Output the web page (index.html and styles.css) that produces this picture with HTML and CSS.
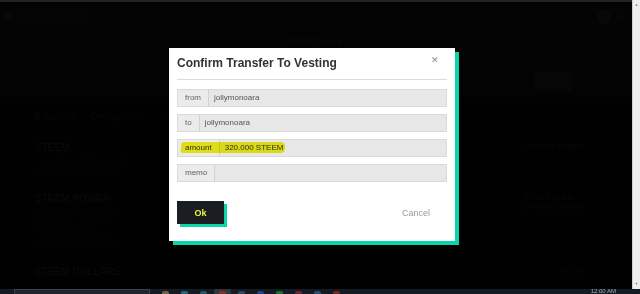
FILE: index.html
```html
<!DOCTYPE html>
<html lang="en">
<head>
  <meta charset="UTF-8" />
  <title>Confirm Transfer To Vesting</title>
  <link rel="stylesheet" href="styles.css">
</head>
<body>
  <div class="screen">
    <div class="viewport">
      <div class="topline"></div>
      <header class="site-header">
        <div class="logo"><span class="logo-mark"></span>steemit wallet</div>
        <div class="header-right"><span class="avatar"></span><span class="burger">&#9776;</span></div>
      </header>
      <div class="banner">
        <div class="banner-name">jollymonoara</div>
        <div class="banner-row">
          <span>Tell Steemit</span>
          <span class="banner-btn">Wallet</span>
        </div>
      </div>
      <nav class="tabs">
        <span>Balances</span>
        <span>Delegations</span>
        <span>Keys</span>
      </nav>
      <section class="wallet">
        <div class="wallet-row">
          <div>
            <h3>STEEM</h3>
            <p>Tradeable tokens that may be</p>
            <p>Steem can be converted to</p>
          </div>
          <div class="wallet-val">320.000 STEEM</div>
        </div>
        <div class="wallet-row">
          <div>
            <h3>STEEM POWER</h3>
            <p>Influence tokens which give</p>
            <p>and allow you to earn on</p>
            <p>STEEM POWER is non-</p>
            <p>to convert back to STEEM.</p>
          </div>
          <div class="wallet-val">0.000 STEEM<br>(+0.000 STEEM)</div>
        </div>
        <div class="wallet-row">
          <h3>STEEM DOLLARS</h3>
          <div class="wallet-val">$0.000</div>
        </div>
      </section>

      <div class="modal">
        <div class="modal-head">
          <h2>Confirm Transfer To Vesting</h2>
          <span class="close">&#x2715;</span>
        </div>
        <div class="fields">
          <div class="field"><span class="field-label">from</span><span class="field-value">jollymonoara</span></div>
          <div class="field"><span class="field-label">to</span><span class="field-value">jollymonoara</span></div>
          <div class="field marked"><span class="field-label">amount</span><span class="field-value">320.000 STEEM</span><span class="highlight"></span></div>
          <div class="field"><span class="field-label">memo</span><span class="field-value"></span></div>
        </div>
        <div class="actions">
          <button class="btn-ok">Ok</button>
          <span class="btn-cancel">Cancel</span>
        </div>
      </div>
    </div>
    <div class="scrollbar">
      <span class="arrow">&#9650;</span>
      <span class="arrow">&#9660;</span>
    </div>
  </div>
  <div class="taskbar">
    <span class="search"></span>
    <span class="tb-icon" style="background:#6a6440"></span>
    <span class="tb-icon" style="background:#25667a"></span>
    <span class="tb-icon" style="background:#215868"></span>
    <span class="tb-icon active" style="background:#863028"></span>
    <span class="tb-icon" style="background:#30455a"></span>
    <span class="tb-icon" style="background:#1e4686"></span>
    <span class="tb-icon" style="background:#1f6e32"></span>
    <span class="tb-icon" style="background:#6a2630"></span>
    <span class="tb-icon" style="background:#265072"></span>
    <span class="tb-icon" style="background:#722626"></span>
    <span class="clock">12:00 AM</span>
  </div>
</body>
</html>
```

FILE: styles.css
```css
* {
  box-sizing: border-box;
}

html,
body {
  height: 100%;
}

body {
  margin: 0;
  font-family: 'Liberation Sans', Arial, sans-serif;
  background: #000;
  display: flex;
  flex-direction: column;
  overflow: hidden;
}

.screen {
  flex: 1;
  display: flex;
  min-height: 0;
}

.viewport {
  flex: 1;
  position: relative;
  background: #010101;
  overflow: hidden;
}

/* dimmed page under the overlay */
.topline {
  height: 2px;
  background: #222;
}

.site-header {
  height: 29px;
  background: #040404;
  display: flex;
  align-items: center;
  justify-content: space-between;
  padding: 0 6px 0 3px;
  color: #080808;
  font-size: 12px;
}

.logo {
  display: flex;
  align-items: center;
  gap: 4px;
}

.logo-mark {
  width: 9px;
  height: 9px;
  border-radius: 50%;
  background: #090909;
}

.header-right {
  display: flex;
  align-items: center;
  gap: 6px;
}

.avatar {
  width: 14px;
  height: 14px;
  border-radius: 50%;
  background: #080808;
}

.burger {
  font-size: 10px;
}

.banner {
  height: 66px;
  background: #030303;
  padding: 4px 0 0;
  color: #080808;
  font-size: 10px;
}

.banner-name {
  text-align: center;
  font-weight: bold;
  font-size: 10px;
  margin-left: -8px;
}

.banner-row {
  display: flex;
  justify-content: space-between;
  align-items: flex-end;
  padding: 26px 60px 0 57px;
}

.banner-btn {
  background: #060606;
  padding: 4px 6px;
}

.tabs {
  display: flex;
  gap: 16px;
  padding: 14px 34px 0;
  color: #080808;
  font-size: 10px;
}

.wallet {
  padding: 20px 48px 0 35px;
  color: #060606;
  font-size: 7px;
}

.wallet h3 {
  margin: 0 0 4px;
  font-size: 10px;
  color: #080808;
}

.wallet p {
  margin: 0 0 4px;
}

.wallet-row {
  display: flex;
  justify-content: space-between;
  margin-bottom: 14px;
}

.wallet-val {
  font-size: 8px;
  color: #070707;
  font-weight: bold;
}

/* modal */
.modal {
  position: absolute;
  left: 169px;
  top: 48px;
  width: 286px;
  height: 193px;
  background: #fff;
  box-shadow: 4px 4px 0 #06d6a9;
  padding: 0 8px;
}

.modal-head {
  display: flex;
  justify-content: space-between;
  align-items: flex-start;
  padding: 9px 0 9px;
  border-bottom: 1px solid #dcdcdc;
}

.modal-head h2 {
  margin: 0;
  font-size: 12px;
  line-height: 13px;
  color: #333;
}

.close {
  font-size: 9px;
  color: #8a8a8a;
  margin-right: 8px;
  margin-top: -2px;
}

.fields {
  display: flex;
  flex-direction: column;
  gap: 7px;
  padding-top: 9px;
}

.field {
  position: relative;
  display: flex;
  height: 18px;
  background: #e7e7e7;
  border: 1px solid #dadada;
  font-size: 8px;
  line-height: 16px;
}

.field-label {
  padding: 0 7px;
  color: #666;
  background: #ebebeb;
  border-right: 1px solid #d2d2d2;
}

.field-value {
  flex: 1;
  padding-left: 5px;
  color: #555;
}

.marked .field-label,
.marked .field-value {
  color: #333;
}

.highlight {
  position: absolute;
  left: 3px;
  top: 2px;
  width: 104px;
  height: 11px;
  background: #f0f01c;
  mix-blend-mode: multiply;
  border-radius: 2px 5px 4px 2px;
  transform: skewX(-6deg);
}

.actions {
  display: flex;
  justify-content: space-between;
  align-items: center;
  padding-top: 19px;
}

.btn-ok {
  width: 47px;
  height: 23px;
  background: #1a1e23;
  border: none;
  box-shadow: 3px 3px 0 #06d6a9;
  color: #f2f233;
  font-family: inherit;
  font-weight: bold;
  font-size: 9px;
  padding: 0;
}

.btn-cancel {
  font-size: 9px;
  color: #9a9a9a;
  margin-right: 17px;
  padding-top: 1px;
}

/* browser scrollbar */
.scrollbar {
  width: 8px;
  background: #eeeeee;
  border-left: 1px solid #cfcfcf;
  display: flex;
  flex-direction: column;
  justify-content: space-between;
  align-items: center;
  font-size: 4px;
  color: #888;
  padding: 2px 0 3px;
}

/* windows taskbar */
.taskbar {
  height: 5px;
  background: #141b23;
  display: flex;
  align-items: flex-start;
  gap: 12px;
  padding-left: 14px;
  overflow: hidden;
}

.search {
  width: 136px;
  height: 5px;
  border: 1px solid #3a4149;
  border-bottom: none;
  background: #20262c;
}

.tb-icon {
  width: 7px;
  height: 5px;
  margin-top: 2px;
  border-radius: 2px 2px 0 0;
}

.tb-icon.active {
  box-shadow: 0 0 0 5px #2e3640;
}

.clock {
  margin-left: auto;
  margin-right: 24px;
  font-size: 6px;
  line-height: 5px;
  color: #a8aeb4;
}
```
